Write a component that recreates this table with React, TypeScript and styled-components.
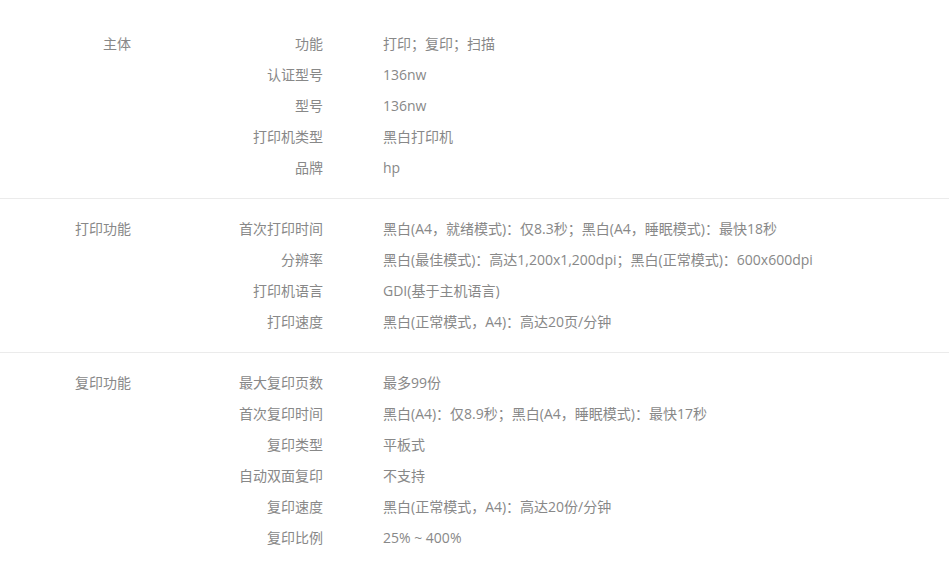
import React from 'react'
import styled, { createGlobalStyle } from 'styled-components'

const GlobalStyle = createGlobalStyle`
  body {
    margin: 0;
    background: #fff;
    font-family: "Open Sans", "Noto Sans CJK SC", sans-serif;
  }
`

type Item = [string, string]
type Group = { title: string; items: Item[] }

const specs: Group[] = [
  {
    title: '主体',
    items: [
      ['功能', '打印；复印；扫描'],
      ['认证型号', '136nw'],
      ['型号', '136nw'],
      ['打印机类型', '黑白打印机'],
      ['品牌', 'hp'],
    ],
  },
  {
    title: '打印功能',
    items: [
      ['首次打印时间', '黑白(A4，就绪模式)：仅8.3秒；黑白(A4，睡眠模式)：最快18秒'],
      ['分辨率', '黑白(最佳模式)：高达1,200x1,200dpi；黑白(正常模式)：600x600dpi'],
      ['打印机语言', 'GDI(基于主机语言)'],
      ['打印速度', '黑白(正常模式，A4)：高达20页/分钟'],
    ],
  },
  {
    title: '复印功能',
    items: [
      ['最大复印页数', '最多99份'],
      ['首次复印时间', '黑白(A4)：仅8.9秒；黑白(A4，睡眠模式)：最快17秒'],
      ['复印类型', '平板式'],
      ['自动双面复印', '不支持'],
      ['复印速度', '黑白(正常模式，A4)：高达20份/分钟'],
      ['复印比例', '25% ~ 400%'],
    ],
  },
]

const Table = styled.div`
  padding-top: 14px;
`

const Section = styled.section`
  display: grid;
  grid-template-columns: 131px 192px 1fr;
  padding: 14px 0 15px;
  border-bottom: 1px solid #ebebeb;
  color: #888;
  font-size: 14px;
  &:last-child {
    border-bottom: none;
  }
`

const Title = styled.div`
  text-align: right;
  line-height: 31px;
`

const Rows = styled.div`
  grid-column: 2 / 4;
  display: flex;
  flex-direction: column;
`

const Row = styled.div`
  display: grid;
  grid-template-columns: 192px 1fr;
  column-gap: 60px;
  height: 31px;
  line-height: 31px;
`

const Key = styled.span`
  text-align: right;
  white-space: nowrap;
`

const Value = styled.span`
  white-space: nowrap;
`

const App: React.FC = () => {
  return (
    <>
      <GlobalStyle />
      <Table>
        {specs.map((group) => (
          <Section key={group.title}>
            <Title>{group.title}</Title>
            <Rows>
              {group.items.map(([k, v]) => (
                <Row key={k}>
                  <Key>{k}</Key>
                  <Value>{v}</Value>
                </Row>
              ))}
            </Rows>
          </Section>
        ))}
      </Table>
    </>
  )
}

export default App
